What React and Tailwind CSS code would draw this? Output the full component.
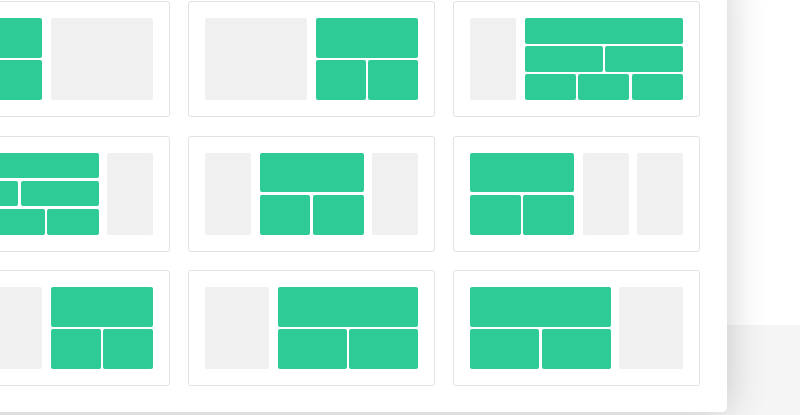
import React from "react";

// layout preset picker (modal over page)
const Gray = ({ w = "flex-1" }) => (
  <div className={`${w} h-full bg-[#f0f0f0] rounded-[2px]`} />
);

const Cell = () => <div className="flex-1 bg-[#2ecb96] rounded-[2px]" />;

const Row = ({ n }) => (
  <div className="flex-1 flex gap-[2.5px]">
    {Array.from({ length: n }).map((_, i) => (
      <Cell key={i} />
    ))}
  </div>
);

// top full, bottom split in two
const Green2 = ({ w = "flex-1" }) => (
  <div className={`${w} h-full flex flex-col gap-[2.5px]`}>
    <Row n={1} />
    <Row n={2} />
  </div>
);

// 1 / 2 / 3 rows
const Green3 = ({ w = "flex-1" }) => (
  <div className={`${w} h-full flex flex-col gap-[2.5px]`}>
    <Row n={1} />
    <Row n={2} />
    <Row n={3} />
  </div>
);

const Card = ({ children }) => (
  <div className="w-[247px] h-[116px] bg-white border-[1.5px] border-[#e2e2e2] rounded-[3px] p-[16px]">
    <div className="w-full h-full flex gap-[8.5px]">{children}</div>
  </div>
);

export default function App() {
  return (
    <div className="relative w-[800px] h-[415px] overflow-hidden flex flex-col">
      <div className="h-[325px] bg-white" />
      <div className="flex-1 bg-[#f5f5f5]" />

      <div className="absolute left-[-103px] top-[-25px] w-[830px] h-[437px] bg-white rounded-[5px] shadow-[0_0_40px_rgba(0,0,0,0.2)] pt-[26px] pl-[26px]">
        <div className="grid grid-cols-[247px_247px_247px] gap-x-[18px] gap-y-[18.5px]">
          <Card>
            <Green2 />
            <Gray />
          </Card>
          <Card>
            <Gray />
            <Green2 />
          </Card>
          <Card>
            <Gray w="w-[46px]" />
            <Green3 />
          </Card>

          <Card>
            <Green3 />
            <Gray w="w-[46px]" />
          </Card>
          <Card>
            <Gray w="w-[46px]" />
            <Green2 />
            <Gray w="w-[46px]" />
          </Card>
          <Card>
            <Green2 />
            <Gray w="w-[46px]" />
            <Gray w="w-[46px]" />
          </Card>

          <Card>
            <Gray />
            <Green2 />
          </Card>
          <Card>
            <Gray w="w-[64px]" />
            <Green2 />
          </Card>
          <Card>
            <Green2 />
            <Gray w="w-[64px]" />
          </Card>
        </div>
      </div>
    </div>
  );
}
